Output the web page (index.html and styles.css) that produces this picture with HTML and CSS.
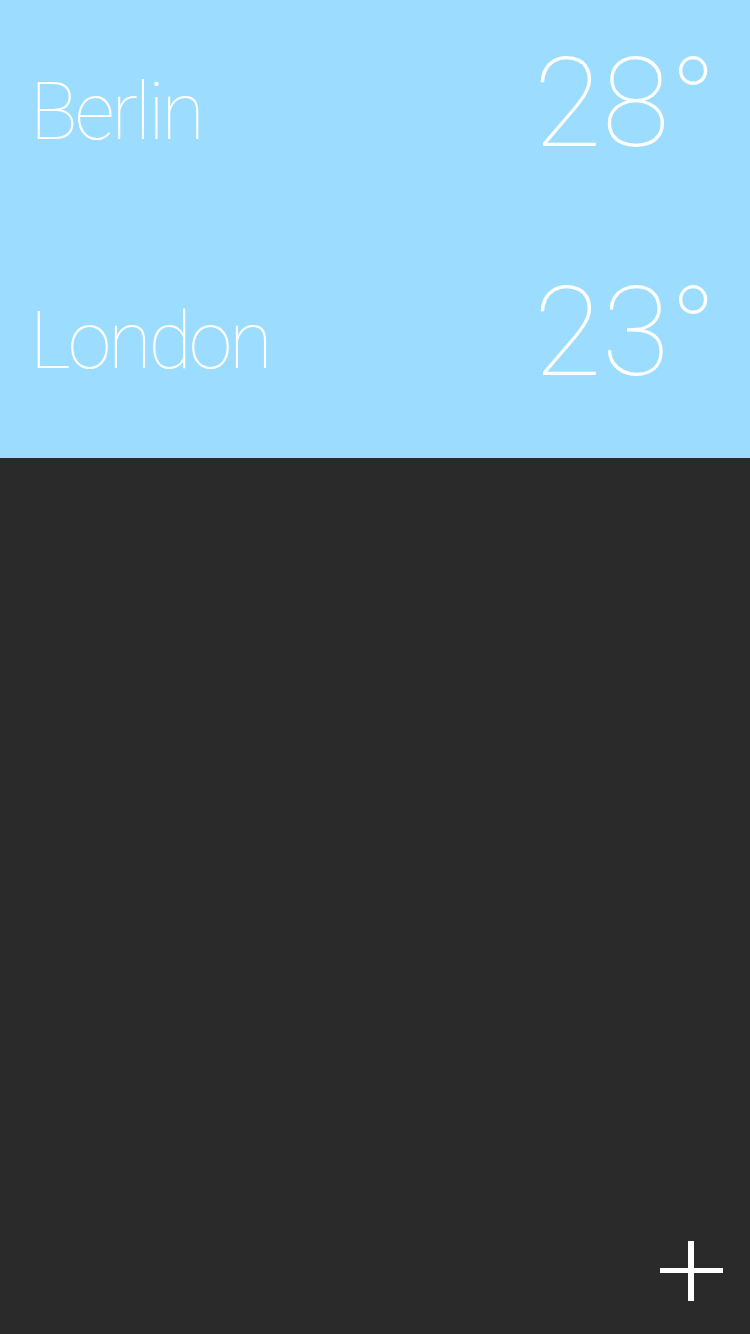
FILE: index.html
```html
<!DOCTYPE html>
<html>
<head>
<meta charset="utf-8">
<link rel="stylesheet" href="styles.css">
</head>
<body>
<div class="app">
  <div class="cities">
    <div class="city">
      <span class="name">Berlin</span>
      <span class="temp">28°</span>
    </div>
    <div class="city">
      <span class="name">London</span>
      <span class="temp">23°</span>
    </div>
  </div>
  <div class="empty">
    <button class="add" aria-label="Add city">
      <svg width="64" height="60" viewBox="0 0 64 60">
        <rect x="28" y="0" width="6" height="60" fill="#fff"/>
        <rect x="0" y="27" width="63" height="5" fill="#fff"/>
      </svg>
    </button>
  </div>
</div>
</body>
</html>
```
FILE: styles.css
```css
html, body {
  margin: 0;
  padding: 0;
  height: 100%;
}
body {
  background: #2a2a2a;
  font-family: Roboto, "Helvetica Neue", "Liberation Sans", sans-serif;
  font-weight: 100;
  color: #fff;
}
.app {
  display: flex;
  flex-direction: column;
  height: 1334px;
}
.cities {
  background: #9cdcfe;
  display: flex;
  flex-direction: column;
}
.city {
  height: 229px;
  display: flex;
  align-items: center;
  justify-content: space-between;
  padding: 0 33px 0 30px;
  box-sizing: border-box;
}
.name {
  font-size: 79px;
  line-height: 1;
  letter-spacing: -3px;
  margin-top: -5px;
}
.temp {
  font-size: 124px;
  line-height: 1;
  letter-spacing: 0;
  margin-top: -22px;
}
.empty {
  flex: 1;
  display: flex;
  align-items: flex-end;
  justify-content: flex-end;
  padding: 0 26px 33px 0;
}
.add {
  background: none;
  border: 0;
  padding: 0;
  display: block;
  cursor: pointer;
}
.add svg {
  display: block;
}
```
